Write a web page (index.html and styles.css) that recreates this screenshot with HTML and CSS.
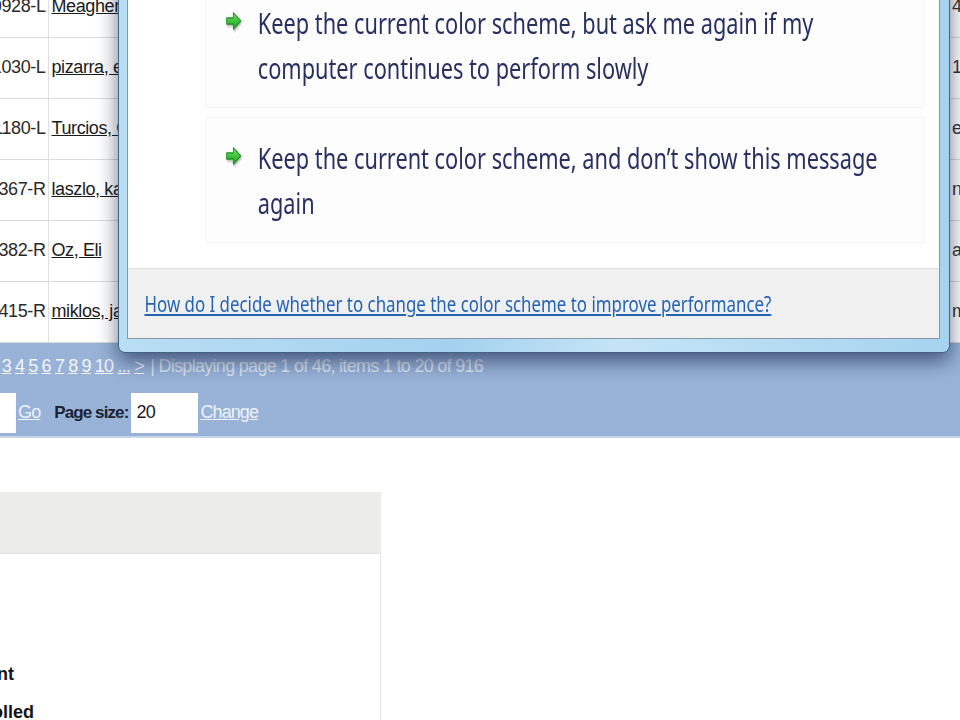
FILE: index.html
```html
<!DOCTYPE html>
<html lang="en">

<head>
    <meta charset="UTF-8">
    <title>Roster</title>
    <link rel="stylesheet" href="styles.css">
</head>

<body>
    <div class="page">
        <!-- grid rows behind the dialog -->
        <table class="grid">
            <colgroup>
                <col class="col-code">
                <col class="col-name">
                <col class="col-extra">
            </colgroup>
            <tr><td class="code">10928-L</td><td class="name"><a href="#">Meagher, Thomas</a></td><td class="extra">4 - Senior</td></tr>
            <tr><td class="code">11030-L</td><td class="name"><a href="#">pizarra, eduardo</a></td><td class="extra">1 - Freshman</td></tr>
            <tr><td class="code">11180-L</td><td class="name"><a href="#">Turcios, Carlos</a></td><td class="extra">enrolled</td></tr>
            <tr><td class="code">12367-R</td><td class="name"><a href="#">laszlo, katalin</a></td><td class="extra">n/a</td></tr>
            <tr><td class="code">12382-R</td><td class="name"><a href="#">Oz, Eli</a></td><td class="extra">active</td></tr>
            <tr><td class="code">12415-R</td><td class="name"><a href="#">miklos, janos</a></td><td class="extra">member</td></tr>
        </table>

        <div class="pager">
            <div class="pager-pages">
                <span class="current">1</span>
                <a href="#">2</a>
                <a href="#">3</a>
                <a href="#">4</a>
                <a href="#">5</a>
                <a href="#">6</a>
                <a href="#">7</a>
                <a href="#">8</a>
                <a href="#">9</a>
                <a href="#">10</a>
                <a href="#">...</a>
                <a href="#">&gt;</a>
                <span class="pager-info">| Displaying page 1 of 46, items 1 to 20 of 916</span>
            </div>
            <div class="pager-form">
                <label class="pager-label">Page</label>
                <input class="pager-input pager-input-page" type="text" value="">
                <a href="#" class="pager-go">Go</a>
                <label class="pager-label pager-size">Page size:</label>
                <input class="pager-input pager-input-size" type="text" value="20">
                <a href="#" class="pager-change">Change</a>
            </div>
        </div>

        <div class="detail">
            <div class="detail-head"></div>
            <div class="detail-body">
                <div class="detail-row">Count</div>
                <div class="detail-row">Enrolled</div>
            </div>
        </div>
    </div>

    <!-- performance dialog on top of the page -->
    <div class="dialog">
        <div class="dialog-body">
            <div class="dialog-content">
                <div class="options">
                    <a href="#" class="option">
                        <svg class="option-arrow" width="28" height="20" viewBox="0 0 20 18">
                            <defs>
                                <linearGradient id="arrowFill" x1="0" y1="0" x2="0" y2="1">
                                    <stop offset="0" stop-color="#72e35f" />
                                    <stop offset="1" stop-color="#14a01c" />
                                </linearGradient>
                            </defs>
                            <path d="M1.5 6.2 H9.5 V1.5 L18.5 9 L9.5 16.5 V11.8 H1.5 Z" fill="url(#arrowFill)" stroke="#1a8a1f" stroke-width="1" stroke-linejoin="round" />
                        </svg>
                        <span class="option-text">Keep the current color scheme, but ask me again if my computer continues to perform slowly</span>
                    </a>
                    <a href="#" class="option">
                        <svg class="option-arrow" width="28" height="20" viewBox="0 0 20 18">
                            <path d="M1.5 6.2 H9.5 V1.5 L18.5 9 L9.5 16.5 V11.8 H1.5 Z" fill="url(#arrowFill)" stroke="#1a8a1f" stroke-width="1" stroke-linejoin="round" />
                        </svg>
                        <span class="option-text">Keep the current color scheme, and don’t show this message again</span>
                    </a>
                </div>
                <div class="dialog-footer">
                    <a href="#">How do I decide whether to change the color scheme to improve performance?</a>
                </div>
            </div>
        </div>
    </div>
</body>

</html>
```

FILE: styles.css
```css
* {
    margin: 0;
    padding: 0;
    box-sizing: border-box;
}

html,
body {
    background: #fff;
    overflow: hidden;
    height: 720px;
}

body {
    font-family: "Liberation Sans", Arial, sans-serif;
    font-size: 18px;
    color: #1e1e1e;
}

/* page is scrolled a bit right and down */
.page {
    width: 1100px;
    margin: -24px 0 0 -70px;
}

.grid {
    border-collapse: collapse;
    table-layout: fixed;
    width: 1100px;
}

.col-code {
    width: 118px;
}

.col-name {
    width: 902px;
}

.col-extra {
    width: 80px;
}

.grid td {
    height: 61px;
    border-bottom: 1px solid #d9dadc;
    white-space: nowrap;
    overflow: hidden;
    letter-spacing: -0.4px;
}

.grid .code {
    text-align: right;
    padding-right: 2px;
    border-right: 1px solid #dedfe1;
    color: #2a2a2a;
}

.grid .name {
    padding-left: 3px;
}

.grid .name a {
    color: #1b1b1b;
    text-decoration: underline;
}

.grid .extra {
    padding-left: 2px;
    color: #333;
}

.pager {
    background: #98b2d8;
    border-bottom: 2px solid #c8d5ea;
    padding: 12px 0 3px 0;
    height: 95px;
}

.pager-pages {
    display: flex;
    align-items: center;
    gap: 4px;
    padding-left: 45px;
    line-height: 22px;
    color: #e7edf6;
    white-space: nowrap;
    letter-spacing: -0.7px;
}

.pager-pages a {
    color: #f3f6fb;
}

.pager-pages .current {
    font-weight: bold;
}

.pager-info {
    margin-left: 2px;
    color: #dfe6f1;
}

.pager-form {
    display: flex;
    align-items: center;
    margin-top: 16px;
    padding-left: 4px;
    height: 40px;
    letter-spacing: -0.9px;
}

.pager-label {
    font-weight: bold;
    font-size: 17px;
    color: #1a2233;
}

.pager-input {
    height: 40px;
    border: none;
    background: #fff;
    font-family: inherit;
    font-size: 18px;
    letter-spacing: -0.6px;
    color: #1a1a1a;
    padding-left: 5px;
    outline: none;
}

.pager-input-page {
    width: 40px;
    margin-left: 5px;
}

.pager-input-size {
    width: 67px;
    margin-left: 3px;
}

.pager-go,
.pager-change {
    color: #eef3fa;
    margin-left: 2px;
}

.pager-size {
    margin-left: 14px;
}

.detail {
    width: 451px;
    margin-top: 54px;
}

.detail-head {
    height: 62px;
    background: #ececea;
    border-bottom: 1px solid #e3e3e1;
}

.detail-body {
    height: 200px;
    border-right: 1px solid #e4e4e4;
    padding: 109px 0 0 32px;
}

.detail-row {
    font-weight: bold;
    line-height: 22px;
    margin-bottom: 16px;
    color: #151515;
}

/* aero style dialog */
.dialog {
    position: absolute;
    left: 118px;
    top: -40px;
    width: 832px;
    padding: 0 9px 13px 8px;
    border: 1px solid #3e6583;
    border-top: none;
    border-radius: 0 0 7px 7px;
    background: linear-gradient(to right, #b9def4, #a4d1ee 40%, #c4e4f6 60%, #a6d3ef);
    box-shadow: 0 8px 20px rgba(12, 24, 56, 0.6);
}

.dialog-body {
    background: #fff;
    border: 1px solid #8698aa;
    border-top: none;
    overflow: hidden;
    font-family: "Noto Sans", "Open Sans", sans-serif;
}

/* the capture is squeezed sideways, so the dialog text is too */
.dialog-content {
    width: 1081px;
    transform: scaleX(0.75);
    transform-origin: 0 0;
}

.options {
    display: flex;
    flex-direction: column;
    gap: 9px;
    padding: 22px 19px 25px 103px;
}

.option {
    display: flex;
    align-items: flex-start;
    gap: 18px;
    padding: 17px 27px 17px 23px;
    background: #fdfdfd;
    border: 1px solid #f0f0f0;
    border-radius: 3px;
    text-decoration: none;
}

.option-arrow {
    flex: none;
    margin-top: 11px;
    filter: drop-shadow(1px 2px 1px rgba(0, 0, 0, 0.25));
}

.option-text {
    font-size: 29px;
    line-height: 45px;
    color: #283060;
    max-width: 847px;
}

.dialog-footer {
    height: 70px;
    background: #f0f0f0;
    border-top: 1px solid #dfdfdf;
    display: flex;
    align-items: center;
    padding-left: 22px;
}

.dialog-footer a {
    font-size: 22.5px;
    color: #2564b3;
    text-decoration: underline;
}
```
